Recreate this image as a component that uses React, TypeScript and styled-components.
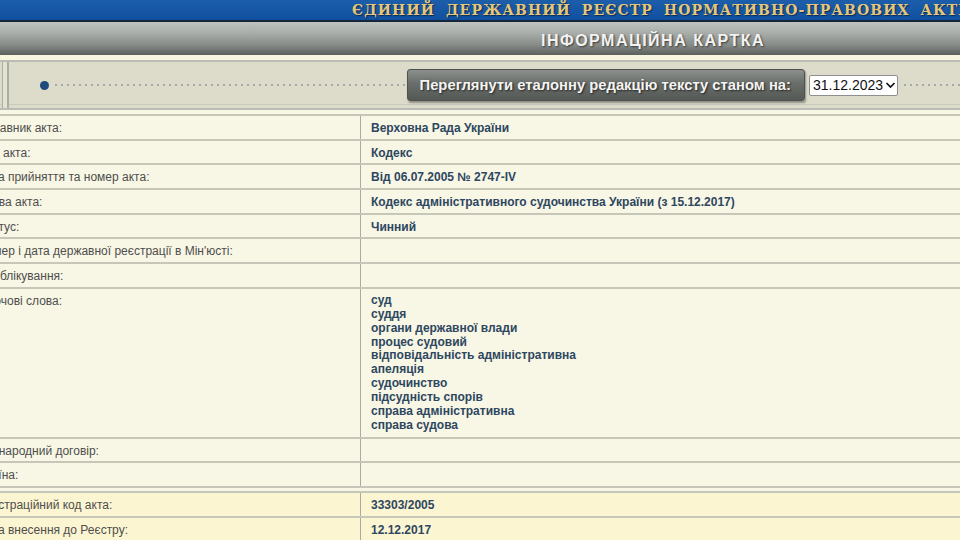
import React from "react";
import styled, { createGlobalStyle } from "styled-components";

const Global = createGlobalStyle`
  html, body { margin: 0; padding: 0; background: #f8f6e4; overflow: hidden; }
  body { width: 960px; height: 540px; font-family: "Liberation Sans", Arial, sans-serif; }
`;

const Page = styled.div`
  margin-left: -28px;
  width: 1000px;
  display: flex;
  flex-direction: column;
`;

const Banner = styled.div`
  height: 20px;
  background: linear-gradient(#1d5eab, #1050a0);
  border-bottom: 2px solid #16263a;
  display: flex;
  align-items: center;
  padding-left: 380px;
  white-space: nowrap;
  overflow: hidden;
`;

const BannerText = styled.span`
  font-family: "DejaVu Serif", serif;
  font-weight: bold;
  font-size: 14px;
  letter-spacing: 1.1px;
  word-spacing: 5px;
  color: #e6c77a;
  text-shadow: 1px 1px 1px #0a2a55;
`;

const TitleBar = styled.div`
  height: 33px;
  background: linear-gradient(#c0c4c0 0%, #a8aca8 35%, #878b87 70%, #5c605c 100%);
  display: flex;
  align-items: center;
  padding-top: 4px;
  box-sizing: border-box;
  padding-left: 569px;
`;

const Title = styled.span`
  font-weight: bold;
  font-size: 16px;
  letter-spacing: 1.5px;
  color: #f2f2f2;
  text-shadow: 1px 1px 2px #3a3c3a;
  white-space: nowrap;
`;

const Gap = styled.div`
  height: 5px;
  background: #f8f6e0;
`;

const Toolbar = styled.div`
  height: 46px;
  margin-left: 28px;
  background: #dddcca;
  border-top: 2px solid #b9bdb3;
  border-bottom: 2px solid #b9bdb3;
  box-shadow: inset 0 -3px 0 #dddcca, inset 0 -4px 0 #c9cbbd;
  display: flex;
  align-items: center;
`;

const Cap = styled.div`
  width: 4px;
  align-self: stretch;
  margin-left: 2px;
  border-left: 1px solid #a9b0a6;
  border-right: 2px solid #a9b0a6;
  background: #e4e3d2;
`;

const Dot = styled.div`
  width: 9px;
  height: 9px;
  border-radius: 50%;
  background: #1f4a7c;
  margin-left: 31px;
  flex-shrink: 0;
`;

const Dotted = styled.div<{ $w?: number }>`
  height: 2px;
  flex: ${(p) => (p.$w ? `0 0 ${p.$w}px` : "1 1 auto")};
  background-image: radial-gradient(circle, #a3aaa8 0.8px, transparent 1.1px);
  background-size: 6px 2px;
  background-position: 2px 0;
  margin: 0 2px;
`;

const ViewButton = styled.button`
  height: 32px;
  padding: 0 13px 0 12px;
  border: 1px solid #4e524e;
  border-radius: 3px;
  background: linear-gradient(#8c908c 0%, #6a6e6a 45%, #555955 100%);
  box-shadow: 1px 2px 2px rgba(0, 0, 0, 0.35);
  font-family: "Liberation Sans", Arial, sans-serif;
  font-weight: bold;
  font-size: 14.8px;
  color: #f4f4f4;
  text-shadow: 1px 1px 2px #202220;
  white-space: nowrap;
  flex-shrink: 0;
`;

const DateBox = styled.label`
  margin-left: 4px;
  width: 89px;
  height: 21px;
  box-sizing: border-box;
  display: flex;
  align-items: center;
  background: #fff;
  border: 1px solid #8f8f8f;
  border-radius: 2px;
  flex-shrink: 0;
  color: #111;
`;

const DateSelect = styled.select`
  appearance: none;
  -webkit-appearance: none;
  border: none;
  outline: none;
  background: transparent;
  font-family: "Liberation Sans", Arial, sans-serif;
  font-size: 14px;
  color: #111;
  padding: 0 0 0 3px;
  width: 75px;
  flex-shrink: 0;
`;

const Chevron = styled.svg`
  width: 11px;
  height: 10px;
  flex-shrink: 0;
`;

const Table = styled.div`
  display: flex;
  flex-direction: column;
  margin-top: 4px;
  border-top: 2px solid #c6c7b9;
`;

const Row = styled.div<{ $yellow?: boolean }>`
  display: grid;
  grid-template-columns: 389px 1fr;
  background: ${(p) => (p.$yellow ? "#fcf5d1" : "#f8f6e4")};
  border-bottom: 2px solid #c6c7b9;
`;

const Label = styled.div`
  padding: 5px 6px 3.7px;
  font-size: 12px;
  line-height: 14px;
  color: #4e4e4e;
  border-right: 1px solid #a9aaa2;
  white-space: nowrap;
  overflow: hidden;
`;

const Value = styled.div`
  padding: 5px 10px 3.7px;
  font-size: 12px;
  line-height: 14px;
  font-weight: bold;
  color: #2d4761;
  min-height: 14px;
`;

const Keyword = styled.div`
  line-height: 13.9px;
`;

const Separator = styled.div`
  height: 3px;
  background: #f8f6e4;
  border-bottom: 2px solid #c6c7b9;
`;

const main: [string, React.ReactNode][] = [
  ["Видавник акта:", "Верховна Рада України"],
  ["Вид акта:", "Кодекс"],
  ["Дата прийняття та номер акта:", "Від 06.07.2005 № 2747-IV"],
  ["Назва акта:", "Кодекс адміністративного судочинства України (з 15.12.2017)"],
  ["Статус:", "Чинний"],
  ["Номер і дата державної реєстрації в Мін'юсті:", ""],
  ["Опублікування:", ""],
];

const keywords = [
  "суд",
  "суддя",
  "органи державної влади",
  "процес судовий",
  "відповідальність адміністративна",
  "апеляція",
  "судочинство",
  "підсудність спорів",
  "справа адміністративна",
  "справа судова",
];

export default function App() {
  return (
    <>
      <Global />
      <Page>
        <Banner>
          <BannerText>ЄДИНИЙ ДЕРЖАВНИЙ РЕЄСТР НОРМАТИВНО-ПРАВОВИХ АКТІВ</BannerText>
        </Banner>
        <TitleBar>
          <Title>ІНФОРМАЦІЙНА КАРТКА</Title>
        </TitleBar>
        <Gap />
        <Toolbar>
          <Cap />
          <Dot />
          <Dotted />
          <ViewButton>Переглянути еталонну редакцію тексту станом на:</ViewButton>
          <DateBox>
            <DateSelect defaultValue="31.12.2023">
              <option>31.12.2023</option>
            </DateSelect>
            <Chevron viewBox="0 0 11 10">
              <path d="M1.5 3 L5.5 7 L9.5 3" fill="none" stroke="#111" strokeWidth="1.7" />
            </Chevron>
          </DateBox>
          <Dotted $w={70} />
        </Toolbar>
        <Table>
          {main.map(([l, v]) => (
            <Row key={l}>
              <Label>{l}</Label>
              <Value>{v}</Value>
            </Row>
          ))}
          <Row>
            <Label>Ключові слова:</Label>
            <Value>
              {keywords.map((k) => (
                <Keyword key={k}>{k}</Keyword>
              ))}
            </Value>
          </Row>
          <Row>
            <Label>Міжнародний договір:</Label>
            <Value />
          </Row>
          <Row>
            <Label>Країна:</Label>
            <Value />
          </Row>
          <Separator />
          <Row $yellow>
            <Label>Реєстраційний код акта:</Label>
            <Value>33303/2005</Value>
          </Row>
          <Row $yellow>
            <Label>Дата внесення до Реєстру:</Label>
            <Value>12.12.2017</Value>
          </Row>
        </Table>
      </Page>
    </>
  );
}
